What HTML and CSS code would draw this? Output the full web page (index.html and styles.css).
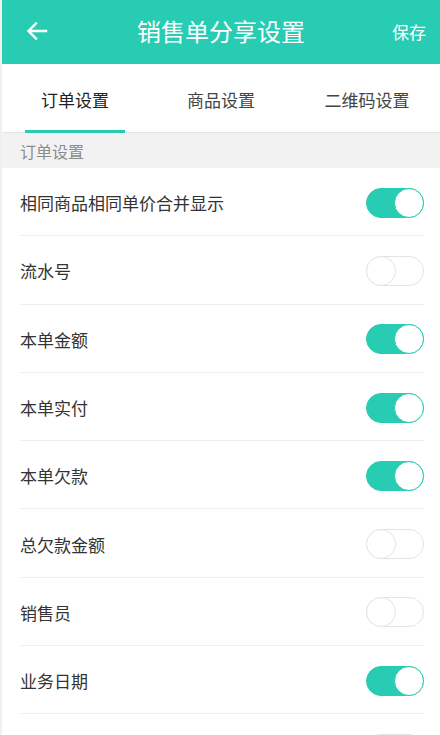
FILE: index.html
```html
<!DOCTYPE html>
<html lang="zh">
<head>
<meta charset="utf-8">
<link rel="stylesheet" href="styles.css">
</head>
<body>
<div class="page">
  <header class="topbar">
    <span class="back">
      <svg width="22" height="20" viewBox="0 0 22 20"><path d="M20 10H3M10 2.5L2.5 10L10 17.5" fill="none" stroke="#fff" stroke-width="2.4" stroke-linecap="square"/></svg>
    </span>
    <h1 class="title">销售单分享设置</h1>
    <span class="save">保存</span>
  </header>
  <nav class="tabs">
    <div class="tab active">订单设置</div>
    <div class="tab">商品设置</div>
    <div class="tab">二维码设置</div>
  </nav>
  <div class="section">订单设置</div>
  <ul class="list">
    <li class="row"><span>相同商品相同单价合并显示</span><span class="sw on"></span></li>
    <li class="row"><span>流水号</span><span class="sw"></span></li>
    <li class="row"><span>本单金额</span><span class="sw on"></span></li>
    <li class="row"><span>本单实付</span><span class="sw on"></span></li>
    <li class="row"><span>本单欠款</span><span class="sw on"></span></li>
    <li class="row"><span>总欠款金额</span><span class="sw"></span></li>
    <li class="row"><span>销售员</span><span class="sw"></span></li>
    <li class="row"><span>业务日期</span><span class="sw on"></span></li>
    <li class="row"><span></span><span class="sw"></span></li>
  </ul>
</div>
</body>
</html>
```
FILE: styles.css
```css
* { box-sizing: border-box; }
html, body { margin: 0; padding: 0; }
body {
  background: #f0f0f0;
  font-family: "Noto Sans CJK SC", "Noto Sans", sans-serif;
  height: 735px;
  overflow: hidden;
}
.page { margin-left: 2px; background: #fff; min-height: 735px; }
.topbar {
  height: 64px;
  background: #27ccb2;
  display: flex;
  align-items: center;
  position: relative;
  color: #fff;
}
.back { position: absolute; left: 24px; top: 21px; display: flex; }
.title {
  margin: 0;
  flex: 1;
  text-align: center;
  font-size: 24px;
  font-weight: 400;
  line-height: 1;
  padding-bottom: 2px;
}
.save { position: absolute; right: 14px; top: 22px; font-size: 17px; line-height: 1.2; }
.tabs {
  display: grid;
  grid-template-columns: repeat(3, 1fr);
  height: 69px;
  border-bottom: 1px solid #e6e6e6;
}
.tab {
  display: flex;
  align-items: center;
  justify-content: center;
  font-size: 17px;
  color: #444;
  position: relative;
  padding-top: 2px;
}
.tab.active { color: #222; }
.tab.active::after {
  content: "";
  position: absolute;
  bottom: -1px;
  left: 23px;
  right: 23px;
  height: 3px;
  background: #27ccb2;
}
.section {
  background: #f2f2f2;
  height: 35px;
  padding-left: 18px;
  display: flex;
  align-items: center;
  font-size: 16px;
  color: #8c8c8c;
}
.list { list-style: none; margin: 0; padding: 0 16px 0 18px; }
.row {
  height: 68.3px;
  display: flex;
  align-items: center;
  justify-content: space-between;
  border-bottom: 1px solid #eeeeee;
  font-size: 17px;
  color: #333;
  padding-top: 2px;
}
.sw {
  width: 58px;
  height: 30px;
  border-radius: 15px;
  border: 1px solid #e4e4e4;
  background: #fff;
  position: relative;
  flex: none;
}
.sw::after {
  content: "";
  position: absolute;
  top: -1px;
  left: -1px;
  width: 30px;
  height: 30px;
  border-radius: 50%;
  background: #fff;
  border: 1px solid #e4e4e4;
  box-sizing: border-box;
}
.sw.on { background: #27ccb2; border-color: #27ccb2; }
.sw.on::after { left: auto; right: -1px; border-color: #27ccb2; }
```
